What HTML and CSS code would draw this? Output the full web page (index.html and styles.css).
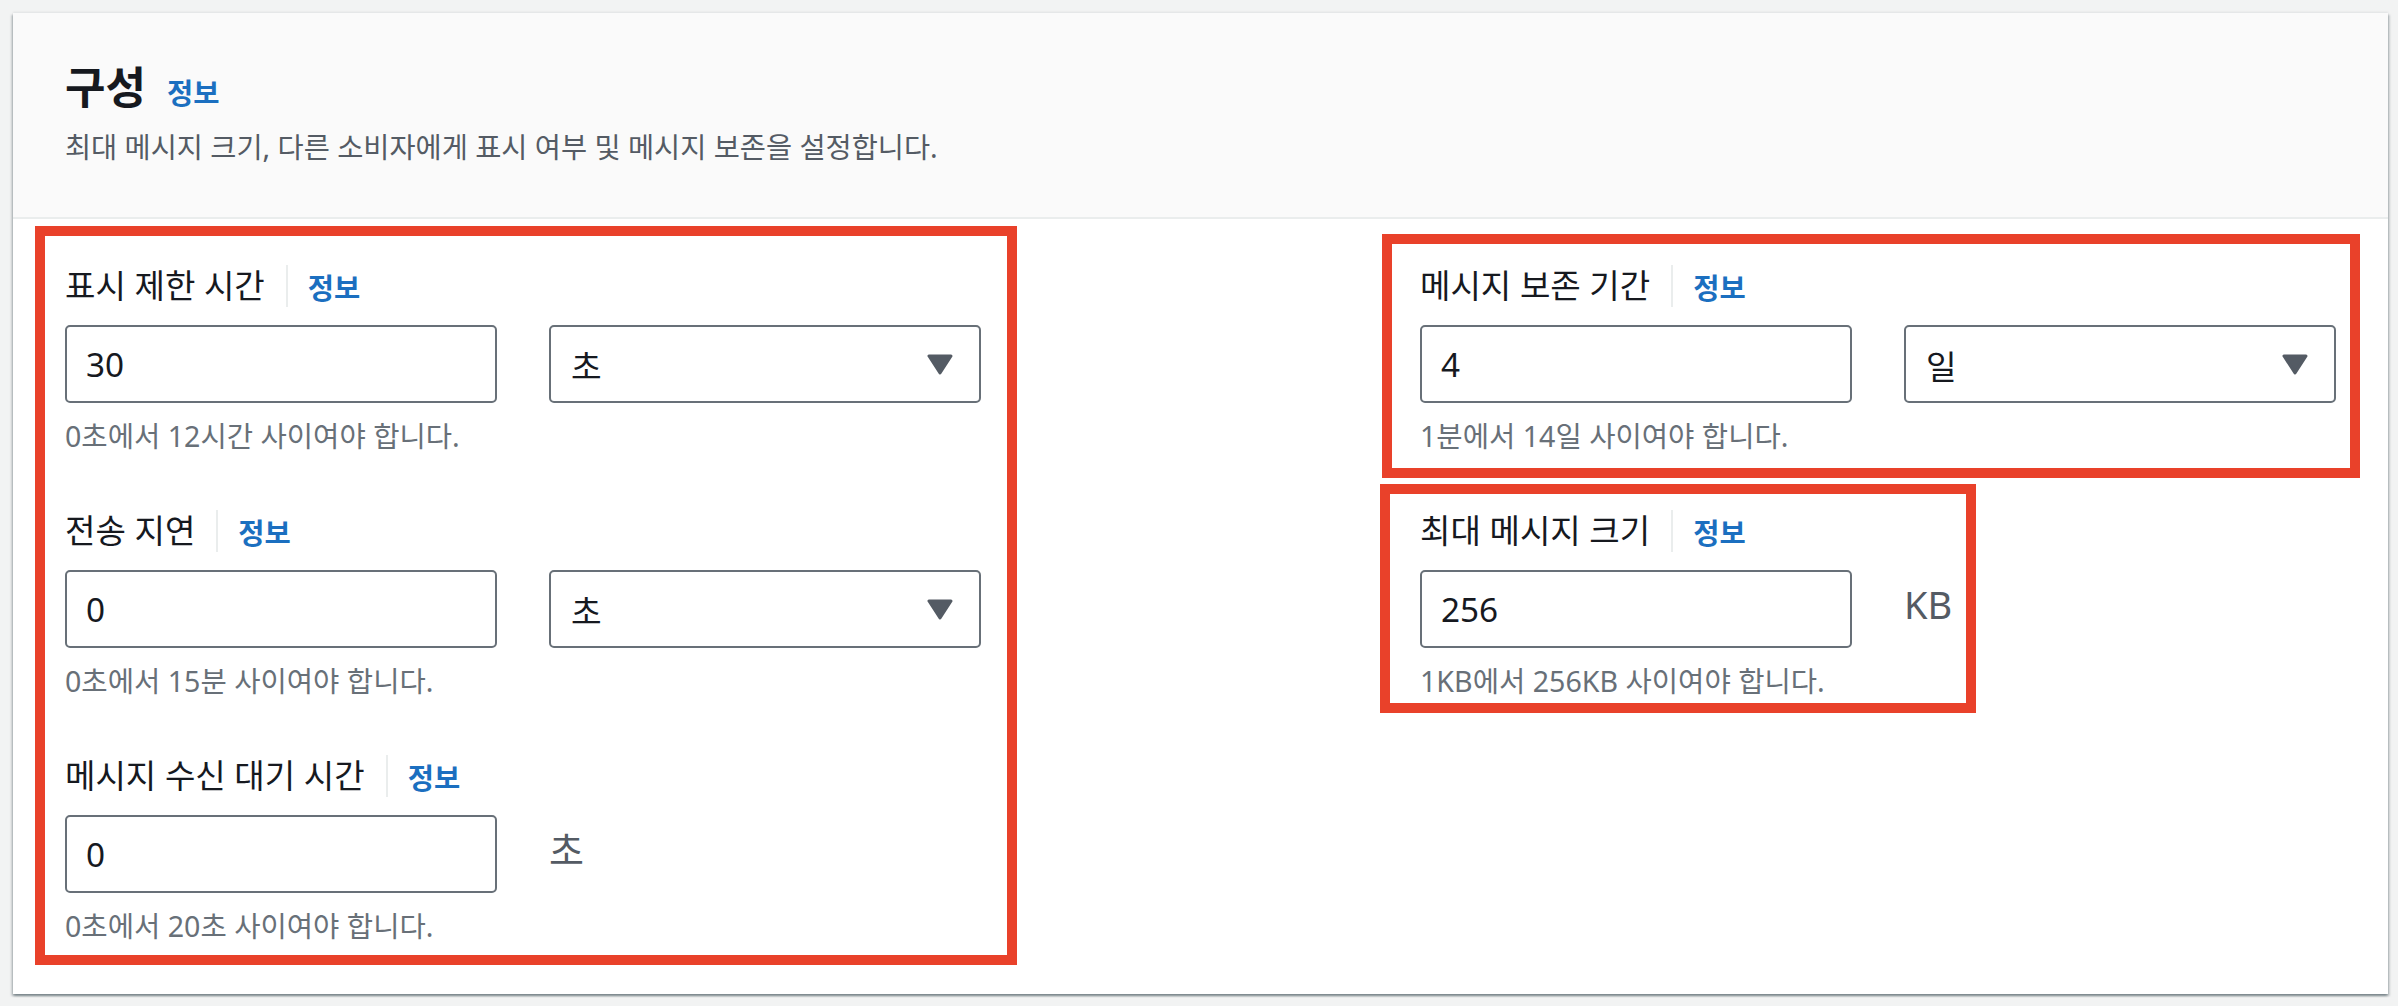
FILE: index.html
```html
<!DOCTYPE html>
<html lang="ko">
<head>
<meta charset="utf-8">
<title>구성</title>
<link rel="stylesheet" href="styles.css">
</head>
<body>
<section class="card">
  <header class="card-header">
    <div class="title-row">
      <h2 class="title">구성</h2>
      <a class="info info-title">정보</a>
    </div>
    <p class="desc">최대 메시지 크기, 다른 소비자에게 표시 여부 및 메시지 보존을 설정합니다.</p>
  </header>
  <div class="card-body">
    <div class="col-left">
      <div class="mark mark-left">
        <div class="field">
          <div class="label-row"><span class="label">표시 제한 시간</span><span class="divider"></span><a class="info">정보</a></div>
          <div class="controls">
            <div class="input">30</div>
            <div class="select"><span>초</span><svg class="caret" viewBox="0 0 26 21" width="26" height="21"><polygon points="2,2 24,2 13,19" fill="#545b64" stroke="#545b64" stroke-width="3" stroke-linejoin="round"/></svg></div>
          </div>
          <div class="hint">0초에서 12시간 사이여야 합니다.</div>
        </div>
        <div class="field">
          <div class="label-row"><span class="label">전송 지연</span><span class="divider"></span><a class="info">정보</a></div>
          <div class="controls">
            <div class="input">0</div>
            <div class="select"><span>초</span><svg class="caret" viewBox="0 0 26 21" width="26" height="21"><polygon points="2,2 24,2 13,19" fill="#545b64" stroke="#545b64" stroke-width="3" stroke-linejoin="round"/></svg></div>
          </div>
          <div class="hint">0초에서 15분 사이여야 합니다.</div>
        </div>
        <div class="field">
          <div class="label-row"><span class="label">메시지 수신 대기 시간</span><span class="divider"></span><a class="info">정보</a></div>
          <div class="controls">
            <div class="input">0</div>
            <div class="unit">초</div>
          </div>
          <div class="hint">0초에서 20초 사이여야 합니다.</div>
        </div>
      </div>
    </div>
    <div class="col-right">
      <div class="mark mark-retention">
        <div class="field">
          <div class="label-row"><span class="label">메시지 보존 기간</span><span class="divider"></span><a class="info">정보</a></div>
          <div class="controls">
            <div class="input">4</div>
            <div class="select"><span>일</span><svg class="caret" viewBox="0 0 26 21" width="26" height="21"><polygon points="2,2 24,2 13,19" fill="#545b64" stroke="#545b64" stroke-width="3" stroke-linejoin="round"/></svg></div>
          </div>
          <div class="hint">1분에서 14일 사이여야 합니다.</div>
        </div>
      </div>
      <div class="mark mark-size">
        <div class="field">
          <div class="label-row"><span class="label">최대 메시지 크기</span><span class="divider"></span><a class="info">정보</a></div>
          <div class="controls controls-unit">
            <div class="input">256</div>
            <div class="unit">KB</div>
          </div>
          <div class="hint">1KB에서 256KB 사이여야 합니다.</div>
        </div>
      </div>
    </div>
  </div>
</section>
</body>
</html>
```

FILE: styles.css
```css
* { box-sizing: border-box; }

html, body {
  margin: 0;
  padding: 0;
  background: #f2f3f3;
  font-family: "Noto Sans", "Noto Sans CJK KR", sans-serif;
  color: #16191f;
}

body {
  padding: 13px 0 0 13px;
  min-height: 1006px;
}

.card {
  width: 2375px;
  background: #ffffff;
  box-shadow: 0 2px 2px rgba(0, 28, 36, 0.3), 2px 2px 2px rgba(0, 28, 36, 0.15), -2px 2px 2px rgba(0, 28, 36, 0.15), 0 -1px 2px rgba(0, 28, 36, 0.08);
}

.card-header {
  background: #fafafa;
  border-bottom: 2px solid #eaeded;
  padding: 50px 52px 50px 52px;
  height: 206px;
}

.title-row {
  display: flex;
  align-items: baseline;
  height: 48px;
}

.title {
  margin: 0;
  font-size: 44px;
  line-height: 48px;
  font-weight: 700;
  color: #16191f;
}

.info {
  font-size: 28.5px;
  font-weight: 700;
  color: #1b6fc0;
  text-decoration: none;
}

.info-title {
  margin-left: 21px;
}

.desc {
  margin: 18px 0 0 0;
  font-size: 28.4px;
  line-height: 36px;
  color: #545b64;
}

.card-body {
  display: flex;
  align-items: flex-start;
  padding: 7px 0 29px 22px;
}

.col-right {
  margin-left: 363px;
  display: flex;
  flex-direction: column;
  align-items: flex-start;
}

.mark {
  border: 10px solid #e9412a;
}

.mark-left {
  padding: 29px 26px 9px 20px;
}

.mark-retention {
  margin-top: 8px;
  margin-left: 2px;
  padding: 21px 14px 12px 28px;
}

.mark-size {
  margin-top: 6px;
  padding: 16px 14px 2px 30px;
}

.field + .field {
  margin-top: 54px;
}

.label-row {
  display: flex;
  align-items: center;
  height: 42px;
}

.label {
  font-size: 33.1px;
  line-height: 42px;
  color: #16191f;
}

.divider {
  width: 2px;
  height: 42px;
  background: #eaeded;
  margin: 0 20px 0 21px;
}

.controls {
  display: grid;
  grid-template-columns: 432px 432px;
  column-gap: 52px;
  margin-top: 18px;
}

.controls-unit {
  grid-template-columns: 432px auto;
}

.input,
.select {
  height: 78px;
  border: 2px solid #687078;
  border-radius: 5px;
  background: #ffffff;
  display: flex;
  align-items: center;
  font-size: 33.3px;
  color: #16191f;
}

.input {
  padding: 0 19px;
}

.select {
  justify-content: space-between;
  padding: 0 26px 0 20px;
}

.caret {
  display: block;
}

.unit {
  font-size: 38px;
  line-height: 68px;
  color: #545b64;
}

.hint {
  margin-top: 13px;
  font-size: 28.6px;
  line-height: 40px;
  color: #687078;
}
```
